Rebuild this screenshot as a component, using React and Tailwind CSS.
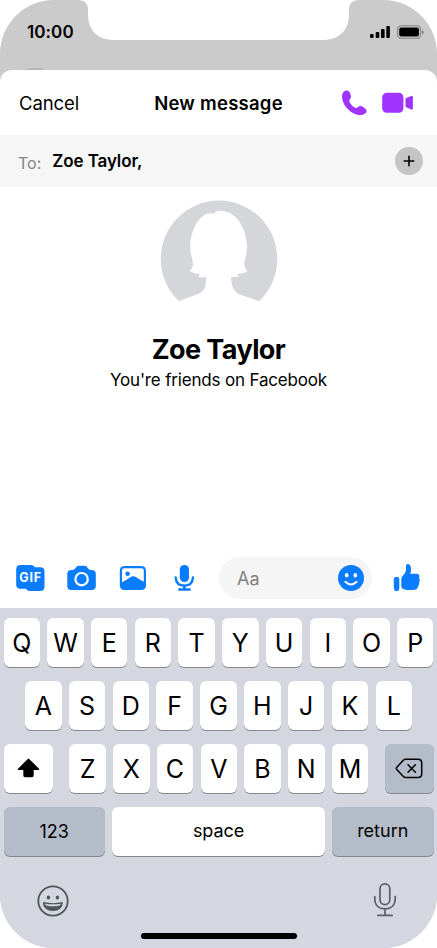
import React from "react";

const rowOne = ["Q", "W", "E", "R", "T", "Y", "U", "I", "O", "P"];
const rowTwo = ["A", "S", "D", "F", "G", "H", "J", "K", "L"];
const rowThree = ["Z", "X", "C", "V", "B", "N", "M"];

const LetterKey = ({ letter }) => (
  <button className="h-[49px] w-[36.5px] shrink-0 rounded-[6px] bg-white pt-[3px] text-[25px] leading-none shadow-[0_1px_0.5px_#85888d]">
    {letter}
  </button>
);

const StatusBar = () => (
  <div className="relative h-[70px] shrink-0">
    {/* Notch */}
    <svg className="absolute left-[78px] top-0" width="281" height="40" viewBox="78 0 281 40" fill="#fff">
      <path d="M78 0C85 0 88 4 88 10V14C88 30 97 40 115 40H322C340 40 349 30 349 14V10C349 4 352 0 359 0Z" />
    </svg>
    <div className="relative flex items-center justify-between pl-[27px] pr-[13px] pt-[22px]">
      <span className="text-[17px] font-semibold leading-5 tracking-[0.1px]">10:00</span>
      <svg width="55" height="16" viewBox="369 24 55 16">
        <rect x="370" y="34" width="3.6" height="4" rx="1" />
        <rect x="375.7" y="32" width="3.6" height="6" rx="1" />
        <rect x="381" y="29" width="3.6" height="9" rx="1" />
        <rect x="386.3" y="26" width="3.6" height="12" rx="1" />
        <rect x="397.6" y="25.7" width="23" height="12.6" rx="3.6" fill="none" stroke="#858585" strokeWidth="1.1" />
        <rect x="399.2" y="27.4" width="19.8" height="9.2" rx="2" />
        <path d="M422 30v4.4q1.8-.7 1.8-2.2T422 30Z" fill="#858585" />
      </svg>
    </div>
    {/* Top edge of the screen behind the sheet */}
    <div className="absolute bottom-0 left-[26px] h-[2px] w-[18px] rounded-[50%_50%_0_0/100%_100%_0_0] bg-[#b2b2b2]" />
  </div>
);

const Header = () => (
  <div className="flex h-[65px] shrink-0 items-center rounded-t-[12px] bg-white pt-px">
    <span className="w-[140px] pl-[19px] pt-px text-[18.5px] tracking-[-0.1px]">Cancel</span>
    <span className="flex-1 pt-px text-center text-[18.5px] font-semibold tracking-[0.25px]">New message</span>
    <svg className="mb-px mr-[21px]" width="119" height="30" viewBox="297 88 119 30" fill="#9f33ff">
      <path d="M345.5 90.8C343.2 91.5 342 93.5 342 96.2C342 106 352 115 360.6 115C363.7 115 366.6 113.3 366.6 110.8C366.6 109.2 364.9 108.1 363 106.9C361 105.6 359.5 105.7 358 107C356.6 108.3 355.8 108.3 354.3 107.3C352.3 106 350.6 104 349.6 102C349 100.8 349.2 100.2 350.1 99C351.3 97.5 351.1 95.7 350.2 93.4C349.3 91.2 347.7 90.1 345.5 90.8Z" />
      <rect x="382.2" y="92.8" width="21.2" height="20" rx="4.6" />
      <path d="M405.5 99.3q0-.8.7-1.2l5.2-2q1.5-.5 1.5 1v11.4q0 1.5-1.5 1l-5.2-2.2q-.7-.4-.7-1.2Z" />
    </svg>
  </div>
);

const Recipients = () => (
  <div className="flex h-[52px] shrink-0 items-center bg-[#f6f6f6] pl-[18px] pr-[14px]">
    <span className="mt-[3px] text-[16px] text-[#858585]">To:</span>
    <span className="ml-[11px] mt-[2px] text-[17px] font-semibold tracking-[-0.1px]">Zoe Taylor,</span>
    <button className="ml-auto flex size-[28px] items-center justify-center rounded-full bg-[#c4c4c4]">
      <svg width="12" height="12" viewBox="0 0 12 12" stroke="#000" strokeWidth="1.6">
        <path d="M6 .7v10.6M.7 6h10.6" />
      </svg>
    </button>
  </div>
);

const Profile = () => (
  <div className="flex flex-1 flex-col items-center bg-white pt-[13px]">
    <svg width="118" height="103" viewBox="160 200 118 103" fill="#d4d6da">
      <path d="M179 301.3A58.3 58.3 0 1 1 259 301.3C250 297 241 296 236.7 292.7C233 290 231.5 285 231 277Q235 277.3 239.5 276.8Q237.5 275.5 237.3 274.2Q243 274 247.3 271.2Q244.6 268.5 244.3 265C244.3 260 247 255 247 247C247 231 238 210.7 220 210.7Q215.5 210.8 213.6 213.8Q211.5 212.4 206.7 214C196 218 190.3 235 190.3 246C190.3 255 193 260 193 265Q192.3 268.5 189.7 271.2Q194.5 274 200 274.2Q199.8 275.6 198 276.9Q202 277.4 206 277C206 285 205 290 201 292.4C196 295.5 187 297 179 301.3Z" />
    </svg>
    <h1 className="mt-[29px] text-[27px] font-bold leading-9 tracking-[-0.6px]">Zoe Taylor</h1>
    <p className="text-[17px] leading-6 tracking-[-0.17px]">You're friends on Facebook</p>
  </div>
);

const Composer = () => (
  <div className="flex h-[61px] shrink-0 items-center bg-white pl-[15px] pr-[15px]">
    <svg className="shrink-0" width="30" height="30" viewBox="15 563 30 30" fill="#0a7cff">
      <path d="M20.5 565H30.5Q33.5 565 35 567.2H40Q44.5 567.2 44.5 571.5V586.5Q44.5 591 40 591H30Q27.3 591 25.8 588.8H20.5Q16.2 588.8 16.2 584.5V569.3Q16.2 565 20.5 565Z" />
      <text x="30.2" y="582.4" textAnchor="middle" textLength="22" fill="#fff" className="font-['Inter'] text-[12.5px] font-bold">GIF</text>
    </svg>
    <svg className="ml-[21px] shrink-0" width="30" height="30" viewBox="66 563 30 30" fill="#0a7cff">
      <path fillRule="evenodd" d="M71.5 570H73.3Q75.2 568.6 76.8 566.5Q77.4 565.7 78.5 565.7H84.8Q86 565.7 86.6 566.6Q88 568.7 89.8 570H91.5Q95.8 570 95.8 574V586Q95.8 590 91.5 590H71.5Q67.3 590 67.3 586V574Q67.3 570 71.5 570ZM81.6 571.9a7.3 7.3 0 1 0 0 14.6a7.3 7.3 0 1 0 0-14.6ZM81.6 574.1a5.1 5.1 0 1 1 0 10.2a5.1 5.1 0 1 1 0-10.2Z" />
    </svg>
    <svg className="ml-[22px] shrink-0" width="30" height="30" viewBox="118 563 30 30" fill="#0a7cff">
      <rect x="119.8" y="566" width="26.2" height="24" rx="4.6" />
      <path fill="#fff" d="M124.2 568.3H141.7Q143.8 568.3 143.8 570.4V581.8Q139 579.2 136.2 577.2Q133 575.2 129.8 577.5Q126.5 580 122 582.3V570.4Q122 568.3 124.2 568.3Z" />
      <circle cx="127.6" cy="573.8" r="2.3" />
    </svg>
    <svg className="ml-[21px] shrink-0" width="30" height="30" viewBox="169 563 30 30" fill="none" stroke="#0a7cff" strokeLinecap="round">
      <rect x="179.8" y="565" width="9.2" height="17" rx="4.5" fill="#0a7cff" stroke="none" />
      <path strokeWidth="2.3" d="M175.6 577.3c.4 5.3 3.6 8.3 8.8 8.3s8.2-3 8.6-8.3" />
      <path strokeWidth="2.6" d="M184.4 586v3M179.3 589.5h10.3" />
    </svg>
    <div className="ml-[20px] flex h-[42px] w-[153px] shrink-0 items-center justify-between rounded-full bg-[#f5f5f5] pl-[18px] pr-[8px]">
      <span className="pt-px text-[18px] text-[#808080]">Aa</span>
      <svg width="26" height="26" viewBox="0 0 26 26" fill="#fff">
        <circle cx="13" cy="13" r="13" fill="#0a7cff" />
        <ellipse cx="8.7" cy="10.3" rx="1.8" ry="2.3" />
        <ellipse cx="17.3" cy="10.3" rx="1.8" ry="2.3" />
        <path d="M7.3 16.8Q13 22 18.7 16.8" fill="none" stroke="#fff" strokeWidth="1.9" strokeLinecap="round" />
      </svg>
    </div>
    <svg className="ml-auto shrink-0" width="30" height="30" viewBox="392 563 30 30" fill="#0a7cff">
      <path d="M395.5 577H397.5Q399.3 577 399.3 579V588.5Q399.3 591 397 591H395.8Q393.8 591 393.8 586V579Q393.8 577 395.5 577Z" />
      <path d="M401.3 579.5Q401.3 577.3 403 575.6C405 573.5 406 571.5 406 568.5V566Q406 564 407.8 564C410.4 564 411 566.8 411 569.5Q411 572 410.3 573.8H417Q419.5 574 419.4 576.3Q419.4 577.3 418.9 578Q420 579 419.8 580.5Q419.7 581.8 418.8 582.5Q419.5 583.5 419.2 584.6Q418.9 585.7 417.9 586.3Q418.3 590 412.5 590H407.5Q404 590 402.3 588.6Q401.3 587.7 401.3 586Z" />
    </svg>
  </div>
);

const Keyboard = () => (
  <div className="flex h-[340px] shrink-0 flex-col bg-[#d4d7df] px-[3.5px] pt-[9.5px]">
    <div className="flex flex-col gap-[14px]">
      <div className="flex justify-between">
        {rowOne.map((letter) => (
          <LetterKey key={letter} letter={letter} />
        ))}
      </div>

      <div className="flex justify-between px-[21.5px]">
        {rowTwo.map((letter) => (
          <LetterKey key={letter} letter={letter} />
        ))}
      </div>

      <div className="flex justify-between">
        <button className="flex h-[49px] w-[49px] items-center justify-center rounded-[6px] bg-white shadow-[0_1px_0.5px_#85888d]">
          <svg width="23" height="20" viewBox="0 0 23 20">
            <path d="M10.8.9Q11.5.2 12.2.9L22 10.7Q22.9 12 21.5 12H16.7V17.5Q16.7 19.2 15 19.2H8Q6.3 19.2 6.3 17.5V12H1.5Q.1 12 1 10.7Z" />
          </svg>
        </button>
        <div className="flex w-[299px] justify-between">
          {rowThree.map((letter) => (
            <LetterKey key={letter} letter={letter} />
          ))}
        </div>
        <button className="flex h-[49px] w-[48.5px] items-center justify-center rounded-[6px] bg-[#b4bcc9] shadow-[0_1px_0.5px_#85888d]">
          <svg width="28" height="21" viewBox="0 0 28 21" fill="none" stroke="#000" strokeWidth="1.5" strokeLinecap="round" strokeLinejoin="round">
            <path d="M10.5 1.3H23Q26.7 1.3 26.7 5V16Q26.7 19.5 23 19.5H10.5Q9.3 19.5 8.3 18.5L1.8 11.5Q.9 10.4 1.8 9.3L8.3 2.3Q9.3 1.3 10.5 1.3Z" />
            <path d="M13 6.8l7.4 7.4M20.4 6.8L13 14.2" />
          </svg>
        </button>
      </div>

      <div className="flex justify-between text-[18px]">
        <button className="h-[49px] w-[101.5px] rounded-[6px] bg-[#b4bcc9] shadow-[0_1px_0.5px_#85888d]">123</button>
        <button className="h-[49px] w-[213px] rounded-[6px] bg-white pb-[2px] tracking-[-0.1px] shadow-[0_1px_0.5px_#85888d]">space</button>
        <button className="h-[49px] w-[101.5px] rounded-[6px] bg-[#b4bcc9] pb-[2px] shadow-[0_1px_0.5px_#85888d]">return</button>
      </div>
    </div>

    <div className="mt-[26px] flex justify-between pl-[33px] pr-[37px]">
      <svg className="mt-[3px]" width="32" height="32" viewBox="36.5 885 32 32" fill="#50555c">
        <circle cx="52.5" cy="901" r="14.7" fill="none" stroke="#50555c" strokeWidth="1.8" />
        <ellipse cx="47.9" cy="897.6" rx="1.7" ry="2" />
        <ellipse cx="56.9" cy="897.6" rx="1.7" ry="2" />
        <path fillRule="evenodd" d="M42.5 902Q52.5 904.3 62.3 902C62.5 908 58 911 52.5 911S42.2 908 42.5 902ZM44.4 903.7Q45 905.2 46 905.5Q52.5 907.2 59 905.5Q60.3 905 60.6 903.7Q52.5 905 44.4 903.7Z" />
      </svg>
      <svg width="24" height="36" viewBox="373 882 24 36" fill="none" stroke="#5b5f68" strokeWidth="1.7" strokeLinecap="round">
        <rect x="380" y="883.8" width="9.8" height="20.8" rx="4.9" />
        <path d="M374.8 896.5v2.5c0 6 4 9.8 10.2 9.8s10.2-3.8 10.2-9.8v-2.5M385 909v6M377.8 915.3h14.4" />
      </svg>
    </div>
    <div className="mx-auto mb-[9.5px] mt-auto h-[6px] w-[156px] rounded-full bg-black" />
  </div>
);

const App = () => {
  return (
    <div className="h-[948px] w-[437px] bg-white">
      <div className="flex h-full flex-col overflow-hidden rounded-[54px] bg-[#cbcbcb] font-['Inter',sans-serif] text-black">
        <StatusBar />
        <Header />
        <Recipients />
        <Profile />
        <Composer />
        <Keyboard />
      </div>
    </div>
  );
};

export default App;
